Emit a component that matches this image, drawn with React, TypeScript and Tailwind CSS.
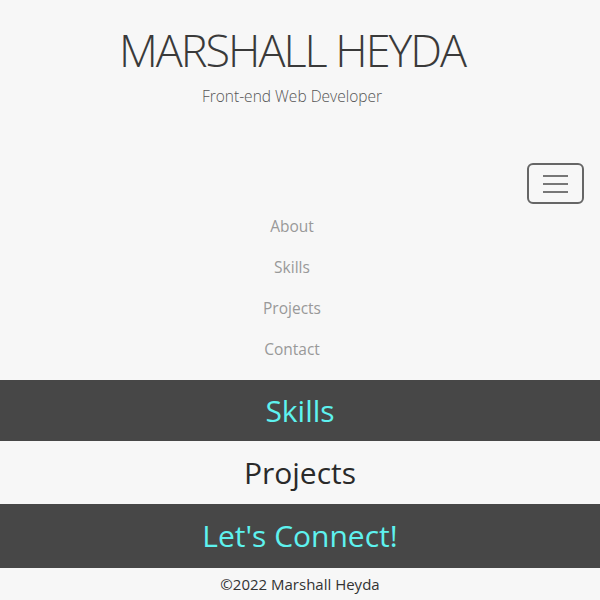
import React from "react";

export default function App() {
  const font = { fontFamily: '"Open Sans", "Noto Sans", sans-serif' };
  return (
    <div className="min-h-[600px] w-[600px] bg-[#f7f7f7] text-[#333]" style={font}>
      <header className="flex flex-col items-center pr-4 pt-[24px]">
        <h1 className="text-[45px] font-light leading-[52px] tracking-[-2px] text-[#3a3a3a]">MARSHALL HEYDA</h1>
        <p className="mt-[10px] text-[15.5px] font-light leading-[20px] text-[#555]">Front-end Web Developer</p>
      </header>
      <div className="mt-[57px] flex justify-end pr-[16px]">
        <button className="flex h-[41px] w-[57px] flex-col items-center justify-center gap-[6px] rounded-[6px] border-2 border-[#666]">
          <span className="block h-[2px] w-[25px] bg-[#777]" />
          <span className="block h-[2px] w-[25px] bg-[#777]" />
          <span className="block h-[2px] w-[25px] bg-[#777]" />
        </button>
      </div>
      <nav className="flex flex-col items-center pr-4 pt-[11px] text-[15.5px] text-[#999]">
        <a className="block h-[41px] leading-[22px]">About</a>
        <a className="block h-[41px] leading-[22px]">Skills</a>
        <a className="block h-[41px] leading-[22px]">Projects</a>
        <a className="block h-[41px] leading-[22px]">Contact</a>
      </nav>
      <section className="mt-[1px] flex h-[61px] items-center justify-center bg-[#474747]">
        <h2 className="text-[30px] leading-none text-[#5ef2ef]">Skills</h2>
      </section>
      <section className="flex h-[63px] items-center justify-center bg-[#f7f7f7]">
        <h2 className="text-[30px] leading-none text-[#2a2a2a]">Projects</h2>
      </section>
      <section className="flex h-[64px] items-center justify-center bg-[#474747]">
        <h2 className="text-[30px] leading-none text-[#5ef2ef]">Let's Connect!</h2>
      </section>
      <footer className="flex h-[32px] items-center justify-center text-[15px] text-[#333]">
        ©2022 Marshall Heyda
      </footer>
    </div>
  );
}
